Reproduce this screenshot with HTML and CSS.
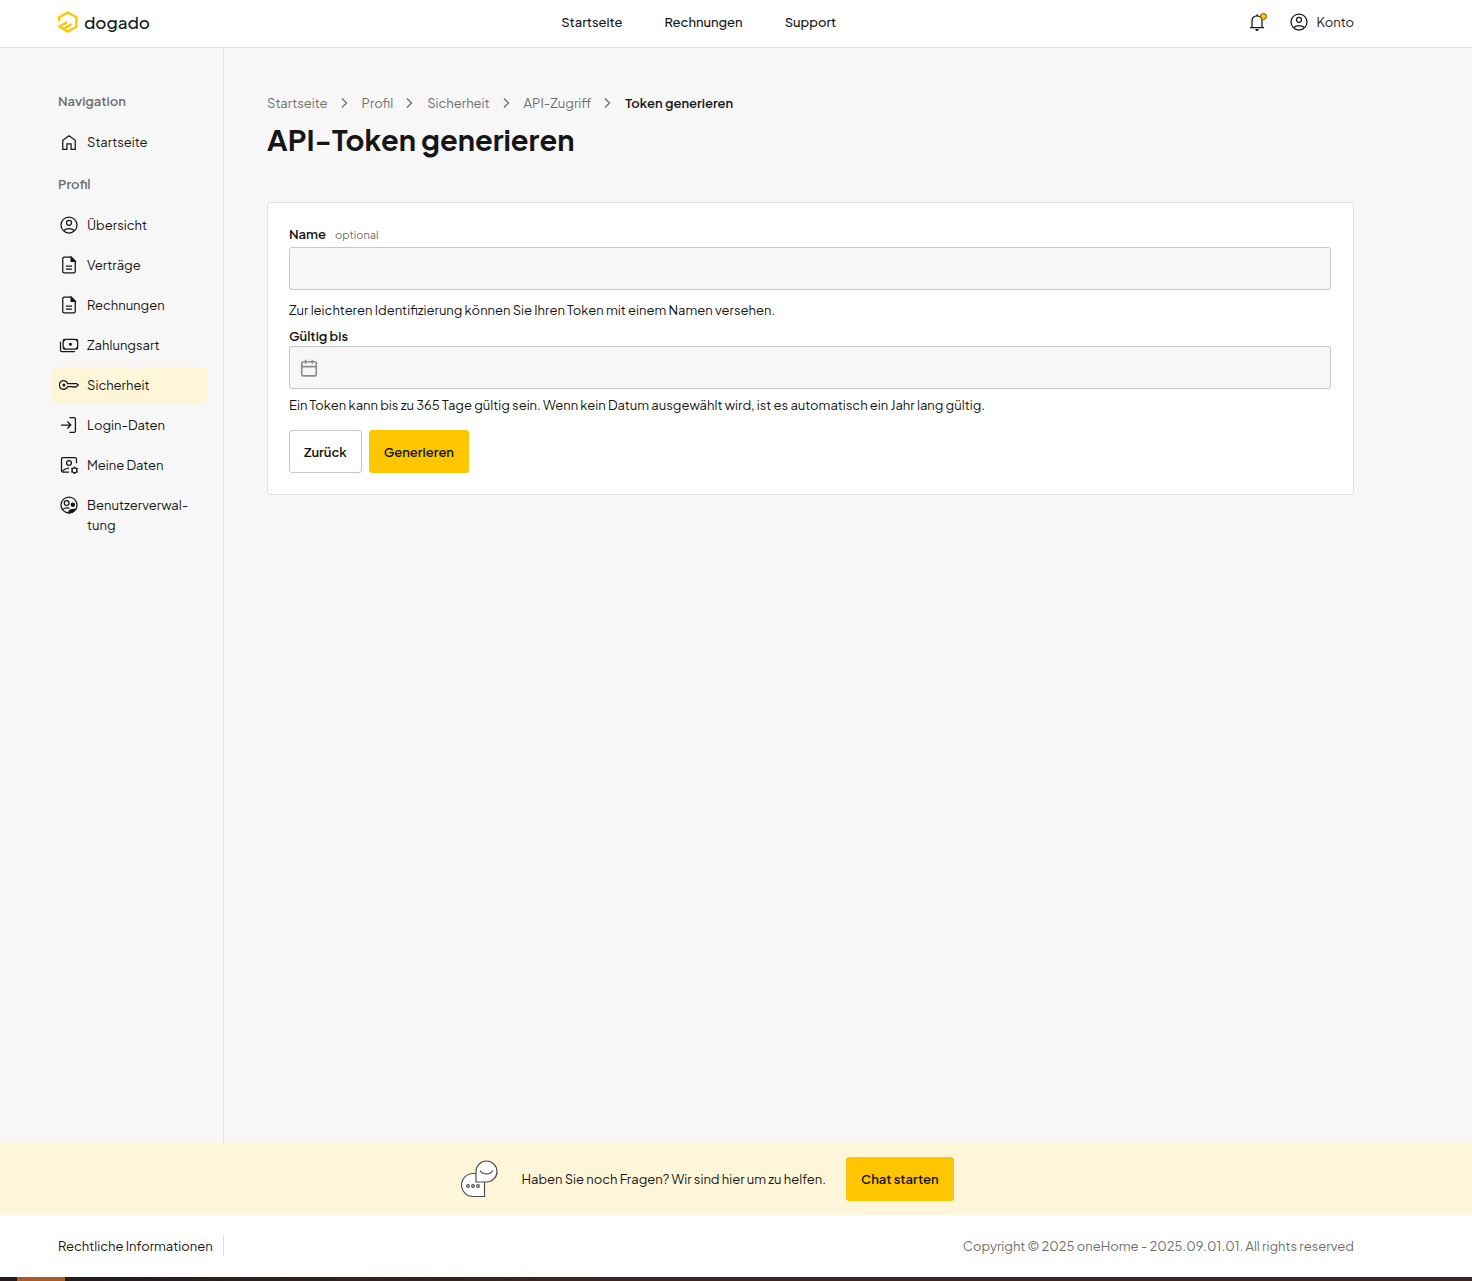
FILE: index.html
```html
<!DOCTYPE html>
<html lang="de">
<head>
    <meta charset="UTF-8">
    <meta name="viewport" content="width=device-width, initial-scale=1.0">
    <title>API-Token generieren</title>
    <link rel="stylesheet" href="styles.css">
</head>
<body>

    <!-- Icons -->
    <svg class="sprite" aria-hidden="true">
        <symbol id="home" viewBox="0 0 24 24">
            <path d="M4.500 20.800V10L12 4.500l7.500 5.500v10.800h-5v-6.600h-5v6.600z"/>
        </symbol>
        <symbol id="user" viewBox="0 0 24 24">
            <circle cx="12" cy="12" r="9.600"/>
            <circle cx="12" cy="9.400" r="3"/>
            <path d="M5.600 18.600c3.600-3.200 9.200-3.200 12.800 0"/>
        </symbol>
        <symbol id="file" viewBox="0 0 24 24">
            <path d="M14.500 2.500H6.200c-1 0-1.700.7-1.700 1.700v15.600c0 1 .7 1.700 1.700 1.700h11.600c1 0 1.700-.7 1.700-1.700V7.500z"/>
            <path class="solid" d="M14.500 2.500v5h5z"/>
            <path d="M8.300 13.200h7.400M8.300 17h7.400"/>
        </symbol>
        <symbol id="cash" viewBox="0 0 24 24">
            <rect x="5" y="5.200" width="17.400" height="11.800" rx="2"/>
            <path d="M1.800 8.200v10c0 1 .7 1.700 1.700 1.700h15.700"/>
            <path d="M5 7.200c1.200 0 2-.8 2-2M22.400 7.200c-1.200 0-2-.8-2-2M5 15c1.200 0 2 .8 2 2M22.400 15c-1.200 0-2 .8-2 2"/>
            <circle class="solid" cx="13.700" cy="11.100" r="1.100"/>
        </symbol>
        <symbol id="key" viewBox="0 0 24 24">
            <path d="M10.300 10.200A5.100 5.100 0 1 0 10.300 13.800h5.500l1.300 1 1.400-1 1.400 1 3.300-2.800-2-1.800z"/>
            <circle class="solid" cx="5.900" cy="12" r="1.100"/>
        </symbol>
        <symbol id="login" viewBox="0 0 24 24">
            <path d="M12.500 3.200h5.500c1 0 1.700.7 1.700 1.700v14.200c0 1-.7 1.700-1.700 1.700h-5.500"/>
            <path d="M2.500 12h11.500M10 7.800l4.200 4.200-4.200 4.200"/>
        </symbol>
        <symbol id="data" viewBox="0 0 24 24">
            <path d="M21 10V4.800c0-1-.7-1.700-1.700-1.700H4.700C3.700 3.100 3 3.800 3 4.800v14c0 1 .7 1.700 1.700 1.700H12"/>
            <circle cx="12" cy="9.600" r="2.900"/>
            <path d="M4 19.500c2-2.300 4.500-3.600 8-3.800"/>
            <circle cx="18.600" cy="18.300" r="3"/>
            <path d="M18.600 13.800v1.600M18.600 21.200v1.600M22.500 16l-1.400.9M16.100 19.700l-1.400.9M22.500 20.600l-1.400-.9M16.100 16.900l-1.400-.9"/>
        </symbol>
        <symbol id="users" viewBox="0 0 24 24">
            <circle cx="12" cy="12" r="9.600"/>
            <circle cx="9.200" cy="9.700" r="2.900"/>
            <circle class="solid" cx="16.600" cy="11.600" r="1.900"/>
            <path d="M4.300 17c2.300-1.600 5.400-2 8.200-1.300"/>
            <path class="solid" d="M11.500 21.200c.4-3 2.700-4.400 8.200-3.900-1.800 2.600-4.600 4.200-8.200 3.900z"/>
        </symbol>
        <symbol id="bell" viewBox="0 0 24 24">
            <path d="M3.500 18.800h17M6 18.800v-8.300c0-3.400 2.500-5.800 6-5.800s6 2.400 6 5.800v8.300M12 4.700V2.800"/>
            <path class="solid" d="M10.800 21.200h2.400a1.200 1 0 0 1-2.400 0z"/>
        </symbol>
        <symbol id="calendar" viewBox="0 0 24 24">
            <rect x="3.300" y="4.500" width="17.400" height="17" rx="2"/>
            <path d="M3.300 10.300h17.400M8 2v5M16 2v5"/>
        </symbol>
        <symbol id="chevron" viewBox="0 0 12 12">
            <path d="M3 1.500L7.500 6 3 10.500"/>
        </symbol>
    </svg>

    <!-- Header -->
    <header class="header">
        <a href="#" class="logo">
            <svg class="logo-mark" viewBox="0 0 20 22" aria-hidden="true">
                <path d="M1.200 10V6.300l8.600-4.800 8.600 4.800v9.400l-8.600 4.800-8.200-5 7.600-4.400M5.800 17.700l7.600-4.400"/>
            </svg>
            <span>dogado</span>
        </a>
        <nav class="main-nav">
            <a href="#">Startseite</a>
            <a href="#">Rechnungen</a>
            <a href="#">Support</a>
        </nav>
        <div class="account">
            <button type="button" class="bell" aria-label="Benachrichtigungen">
                <svg class="icon"><use href="#bell"/></svg>
                <span class="dot"></span>
            </button>
            <a href="#" class="account-link">
                <svg class="icon"><use href="#user"/></svg>
                Konto
            </a>
        </div>
    </header>

    <div class="page">
        <!-- Sidebar -->
        <aside class="sidebar">
            <h2>Navigation</h2>
            <ul>
                <li><a href="#"><svg class="icon"><use href="#home"/></svg>Startseite</a></li>
            </ul>
            <h2>Profil</h2>
            <ul>
                <li><a href="#"><svg class="icon"><use href="#user"/></svg>Übersicht</a></li>
                <li><a href="#"><svg class="icon"><use href="#file"/></svg>Verträge</a></li>
                <li><a href="#"><svg class="icon"><use href="#file"/></svg>Rechnungen</a></li>
                <li><a href="#"><svg class="icon"><use href="#cash"/></svg>Zahlungsart</a></li>
                <li><a href="#" class="active"><svg class="icon"><use href="#key"/></svg>Sicherheit</a></li>
                <li><a href="#"><svg class="icon"><use href="#login"/></svg>Login-Daten</a></li>
                <li><a href="#"><svg class="icon"><use href="#data"/></svg>Meine Daten</a></li>
                <li><a href="#"><svg class="icon"><use href="#users"/></svg><span>Benutzerverwal-<br>tung</span></a></li>
            </ul>
        </aside>

        <!-- Main Content -->
        <main class="content">
            <nav class="breadcrumb">
                <a href="#">Startseite</a>
                <svg class="chevron"><use href="#chevron"/></svg>
                <a href="#">Profil</a>
                <svg class="chevron"><use href="#chevron"/></svg>
                <a href="#">Sicherheit</a>
                <svg class="chevron"><use href="#chevron"/></svg>
                <a href="#">API-Zugriff</a>
                <svg class="chevron"><use href="#chevron"/></svg>
                <strong>Token generieren</strong>
            </nav>
            <h1>API-Token generieren</h1>

            <form class="card">
                <div class="label-row">
                    <label for="name">Name</label>
                    <small>optional</small>
                </div>
                <input type="text" id="name">
                <p class="hint name-hint">Zur leichteren Identifizierung können Sie Ihren Token mit einem Namen versehen.</p>

                <label for="valid">Gültig bis</label>
                <div class="date-field">
                    <input type="text" id="valid">
                    <svg class="icon"><use href="#calendar"/></svg>
                </div>
                <p class="hint">Ein Token kann bis zu 365 Tage gültig sein. Wenn kein Datum ausgewählt wird, ist es automatisch ein Jahr lang gültig.</p>

                <div class="actions">
                    <button type="button" class="btn btn-outline">Zurück</button>
                    <button type="button" class="btn">Generieren</button>
                </div>
            </form>
        </main>
    </div>

    <!-- Chat -->
    <section class="chat">
        <svg class="chat-icon" viewBox="0 0 38 38" aria-hidden="true">
            <path d="M23.500 36.500H12A11.500 11.500 0 0 1 12 13.500h11.500z"/>
            <circle cx="7" cy="26" r="1.300"/>
            <circle cx="12" cy="26" r="1.300"/>
            <circle cx="17" cy="26" r="1.300"/>
            <path d="M15 22V11.500A10.500 10.500 0 1 1 25.500 22z"/>
            <path d="M19 10.500c2.800 4.600 10 4.600 12.800 0"/>
        </svg>
        <p>Haben Sie noch Fragen? Wir sind hier um zu helfen.</p>
        <button type="button" class="btn">Chat starten</button>
    </section>

    <!-- Footer -->
    <footer class="footer">
        <a href="#">Rechtliche Informationen</a>
        <p>Copyright © 2025 oneHome - 2025.09.01.01. All rights reserved</p>
    </footer>
    <div class="bottom-bar"></div>

</body>
</html>
```
FILE: styles.css
```css
* {
    margin: 0;
    padding: 0;
    box-sizing: border-box;
}
body {
    font-family: "Plus Jakarta Sans", Inter, sans-serif;
    font-size: 13px;
    line-height: 20px;
    color: #161616;
    background: #f7f7f7;
    display: flex;
    flex-direction: column;
    min-height: 100vh;
}
a {
    color: inherit;
    text-decoration: none;
}
ul {
    list-style: none;
}
button, input {
    font: inherit;
    color: inherit;
}
.sprite {
    display: none;
}
.icon {
    width: 20px;
    height: 20px;
    flex: none;
    fill: none;
    stroke: currentColor;
    stroke-width: 1.5;
}
.solid {
    fill: currentColor;
}

/* Header */
.header {
    display: flex;
    justify-content: space-between;
    align-items: center;
    height: 48px;
    padding: 0 118px 4px 58px;
    background: #fff;
    border-bottom: 1px solid #e0e0e0;
}
.logo {
    display: flex;
    align-items: center;
    gap: 6px;
    font-size: 17px;
    font-weight: 500;
    color: #101c26;
}
.logo-mark {
    width: 20px;
    height: 22px;
    fill: none;
    stroke: #fec600;
    stroke-width: 2.4;
}
.main-nav {
    display: flex;
    gap: 42px;
    font-weight: 500;
}
.account {
    display: flex;
    align-items: center;
    gap: 22px;
}
.bell {
    position: relative;
    display: flex;
    border: none;
    background: none;
    cursor: pointer;
}
.dot {
    position: absolute;
    top: 1px;
    right: 0;
    width: 7px;
    height: 7px;
    border: 1px solid #6b5300;
    border-radius: 50%;
    background: #fec600;
}
.account-link {
    display: flex;
    align-items: center;
    gap: 7px;
}

/* Sidebar */
.page {
    flex: 1;
    display: flex;
    padding: 0 118px 0 52px;
}
.sidebar {
    width: 172px;
    flex: none;
    padding: 43px 15px 43px 0;
    border-right: 1px solid #e0e0e0;
}
.sidebar h2 {
    padding-left: 6px;
    font-size: 13px;
    font-weight: 600;
    color: #6f6f6f;
}
.sidebar ul {
    display: flex;
    flex-direction: column;
    gap: 4px;
    padding: 13px 0 14px;
}
.sidebar li a {
    display: flex;
    gap: 8px;
    padding: 8px 7px;
    border-radius: 4px;
}
.sidebar li a.active {
    background: #fff6d9;
}

/* Content */
.content {
    flex: 1;
    padding: 45px 0 43px 43px;
}
.breadcrumb {
    display: flex;
    align-items: center;
    gap: 11px;
    color: #6f6f6f;
}
.breadcrumb strong {
    font-weight: 600;
    color: #161616;
}
.chevron {
    width: 12px;
    height: 12px;
    fill: none;
    stroke: currentColor;
    stroke-width: 1.3;
}
h1 {
    margin: 6px 0 43px;
    font-size: 29px;
    font-weight: 700;
    line-height: 40px;
}
.card {
    padding: 21px 22px 21px 21px;
    background: #fff;
    border: 1px solid #e0e0e0;
    border-radius: 3px;
}
.card label {
    display: block;
    font-weight: 600;
}
.label-row {
    display: flex;
    align-items: baseline;
    gap: 9px;
    margin-bottom: 2px;
}
.label-row small {
    font-size: 11px;
    color: #6f6f6f;
}
.card input {
    display: block;
    width: 100%;
    height: 43px;
    padding: 0 12px;
    background: #f7f7f7;
    border: 1px solid #c6c6c6;
    border-radius: 3px;
}
.date-field {
    position: relative;
}
.card .date-field input {
    padding-left: 40px;
}
.date-field .icon {
    position: absolute;
    top: 12px;
    left: 10px;
    color: #8d8d8d;
    stroke-width: 2;
}
.hint {
    margin-top: 6px;
}
.name-hint {
    margin: 10px 0 6px;
}
.actions {
    display: flex;
    gap: 7px;
    margin-top: 15px;
}
.btn {
    height: 43px;
    padding: 0 14px;
    font-weight: 600;
    background: #fec600;
    border: 1px solid #fec600;
    border-radius: 3px;
    cursor: pointer;
}
.btn-outline {
    background: #fff;
    border-color: #c6c6c6;
}

/* Chat */
.chat {
    display: flex;
    justify-content: center;
    align-items: center;
    min-height: 72px;
    padding: 0 115px 0 58px;
    background: #fff6d9;
}
.chat-icon {
    width: 38px;
    height: 38px;
    margin-right: 22px;
    fill: #fff;
    stroke: #4d4d4d;
    stroke-width: 1.2;
}
.chat .btn {
    height: 44px;
    margin-left: 20px;
}

/* Footer */
.footer {
    display: flex;
    justify-content: space-between;
    align-items: center;
    min-height: 62px;
    padding: 0 118px 0 58px;
    background: #fff;
}
.footer a {
    width: 166px;
    border-right: 1px solid #e0e0e0;
}
.footer p {
    color: #6f6f6f;
}
.bottom-bar {
    height: 4px;
    background: linear-gradient(to right, #241c1e 17px, #a85a2a 17px 65px, #241c1e 65px, #3a2622 40%, #3a2622);
}
```
